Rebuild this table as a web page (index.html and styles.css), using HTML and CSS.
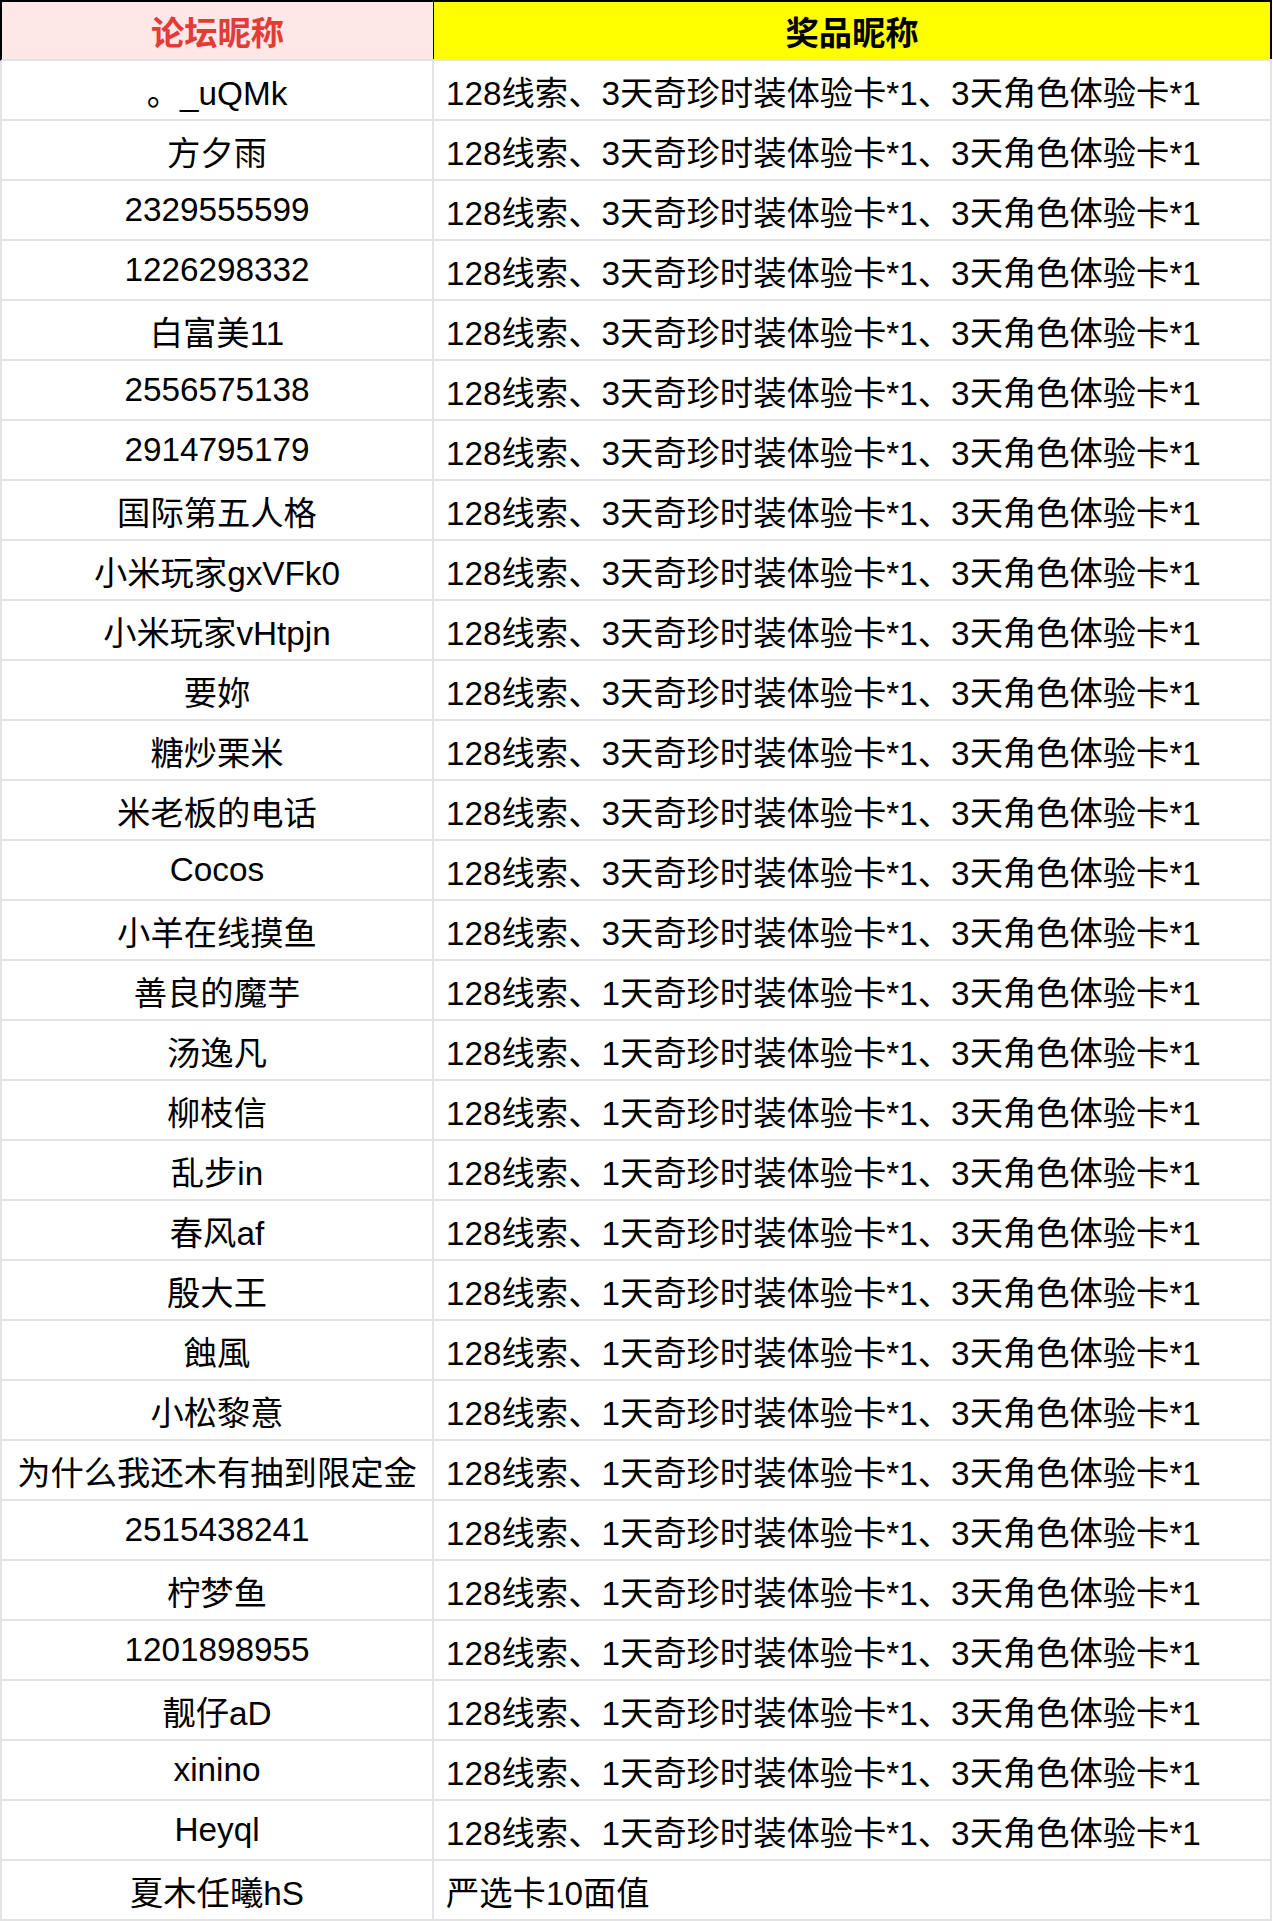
FILE: index.html
```html
<!DOCTYPE html>
<html lang="zh-CN">
<head>
<meta charset="utf-8">
<title>获奖名单</title>
<link rel="stylesheet" href="styles.css">
</head>
<body>
<div class="sheet">
  <div class="row head">
    <div class="cell name">论坛昵称</div>
    <div class="cell prize">奖品昵称</div>
  </div>
  <div class="row"><div class="cell name">。_uQMk</div><div class="cell prize">128线索、3天奇珍时装体验卡*1、3天角色体验卡*1</div></div>
  <div class="row"><div class="cell name">方夕雨</div><div class="cell prize">128线索、3天奇珍时装体验卡*1、3天角色体验卡*1</div></div>
  <div class="row"><div class="cell name">2329555599</div><div class="cell prize">128线索、3天奇珍时装体验卡*1、3天角色体验卡*1</div></div>
  <div class="row"><div class="cell name">1226298332</div><div class="cell prize">128线索、3天奇珍时装体验卡*1、3天角色体验卡*1</div></div>
  <div class="row"><div class="cell name">白富美11</div><div class="cell prize">128线索、3天奇珍时装体验卡*1、3天角色体验卡*1</div></div>
  <div class="row"><div class="cell name">2556575138</div><div class="cell prize">128线索、3天奇珍时装体验卡*1、3天角色体验卡*1</div></div>
  <div class="row"><div class="cell name">2914795179</div><div class="cell prize">128线索、3天奇珍时装体验卡*1、3天角色体验卡*1</div></div>
  <div class="row"><div class="cell name">国际第五人格</div><div class="cell prize">128线索、3天奇珍时装体验卡*1、3天角色体验卡*1</div></div>
  <div class="row"><div class="cell name">小米玩家gxVFk0</div><div class="cell prize">128线索、3天奇珍时装体验卡*1、3天角色体验卡*1</div></div>
  <div class="row"><div class="cell name">小米玩家vHtpjn</div><div class="cell prize">128线索、3天奇珍时装体验卡*1、3天角色体验卡*1</div></div>
  <div class="row"><div class="cell name">要妳</div><div class="cell prize">128线索、3天奇珍时装体验卡*1、3天角色体验卡*1</div></div>
  <div class="row"><div class="cell name">糖炒栗米</div><div class="cell prize">128线索、3天奇珍时装体验卡*1、3天角色体验卡*1</div></div>
  <div class="row"><div class="cell name">米老板的电话</div><div class="cell prize">128线索、3天奇珍时装体验卡*1、3天角色体验卡*1</div></div>
  <div class="row"><div class="cell name">Cocos</div><div class="cell prize">128线索、3天奇珍时装体验卡*1、3天角色体验卡*1</div></div>
  <div class="row"><div class="cell name">小羊在线摸鱼</div><div class="cell prize">128线索、3天奇珍时装体验卡*1、3天角色体验卡*1</div></div>
  <div class="row"><div class="cell name">善良的魔芋</div><div class="cell prize">128线索、1天奇珍时装体验卡*1、3天角色体验卡*1</div></div>
  <div class="row"><div class="cell name">汤逸凡</div><div class="cell prize">128线索、1天奇珍时装体验卡*1、3天角色体验卡*1</div></div>
  <div class="row"><div class="cell name">柳枝信</div><div class="cell prize">128线索、1天奇珍时装体验卡*1、3天角色体验卡*1</div></div>
  <div class="row"><div class="cell name">乱步in</div><div class="cell prize">128线索、1天奇珍时装体验卡*1、3天角色体验卡*1</div></div>
  <div class="row"><div class="cell name">春风af</div><div class="cell prize">128线索、1天奇珍时装体验卡*1、3天角色体验卡*1</div></div>
  <div class="row"><div class="cell name">殷大王</div><div class="cell prize">128线索、1天奇珍时装体验卡*1、3天角色体验卡*1</div></div>
  <div class="row"><div class="cell name">蝕風</div><div class="cell prize">128线索、1天奇珍时装体验卡*1、3天角色体验卡*1</div></div>
  <div class="row"><div class="cell name">小松黎意</div><div class="cell prize">128线索、1天奇珍时装体验卡*1、3天角色体验卡*1</div></div>
  <div class="row"><div class="cell name">为什么我还木有抽到限定金</div><div class="cell prize">128线索、1天奇珍时装体验卡*1、3天角色体验卡*1</div></div>
  <div class="row"><div class="cell name">2515438241</div><div class="cell prize">128线索、1天奇珍时装体验卡*1、3天角色体验卡*1</div></div>
  <div class="row"><div class="cell name">柠梦鱼</div><div class="cell prize">128线索、1天奇珍时装体验卡*1、3天角色体验卡*1</div></div>
  <div class="row"><div class="cell name">1201898955</div><div class="cell prize">128线索、1天奇珍时装体验卡*1、3天角色体验卡*1</div></div>
  <div class="row"><div class="cell name">靓仔aD</div><div class="cell prize">128线索、1天奇珍时装体验卡*1、3天角色体验卡*1</div></div>
  <div class="row"><div class="cell name">xinino</div><div class="cell prize">128线索、1天奇珍时装体验卡*1、3天角色体验卡*1</div></div>
  <div class="row"><div class="cell name">Heyql</div><div class="cell prize">128线索、1天奇珍时装体验卡*1、3天角色体验卡*1</div></div>
  <div class="row"><div class="cell name">夏木任曦hS</div><div class="cell prize">严选卡10面值</div></div>
</div>
</body>
</html>
```

FILE: styles.css
```css
html, body {
  margin: 0;
  padding: 0;
  background: #ffffff;
}

.sheet {
  width: 1272px;
  font-family: "Liberation Sans", "Noto Sans CJK SC", sans-serif;
  font-size: 33.3px;
  color: #000000;
}

.row {
  display: flex;
  border-left: 2px solid #e2e3e7;
  border-bottom: 2px solid #e2e3e7;
}

.cell {
  height: 58px;
  display: flex;
  align-items: center;
  white-space: nowrap;
  overflow: hidden;
}

.cell.name {
  width: 430px;
  justify-content: center;
  border-right: 2px solid #e2e3e7;
}

.cell.prize {
  width: 824px;
  padding-left: 12px;
  border-right: 2px solid #e2e3e7;
}

.row.head {
  border-top: 2px solid #000000;
  border-left: 2px solid #000000;
}

.row.head .cell {
  height: 57px;
  font-weight: bold;
}

.row.head .name {
  width: 431px;
  background: #fee7e7;
  color: #e23c37;
  border-right: 1px solid #000000;
}

.row.head .prize {
  width: 836px;
  padding-left: 0;
  justify-content: center;
  background: #ffff00;
  border-right: 2px solid #000000;
}
```
